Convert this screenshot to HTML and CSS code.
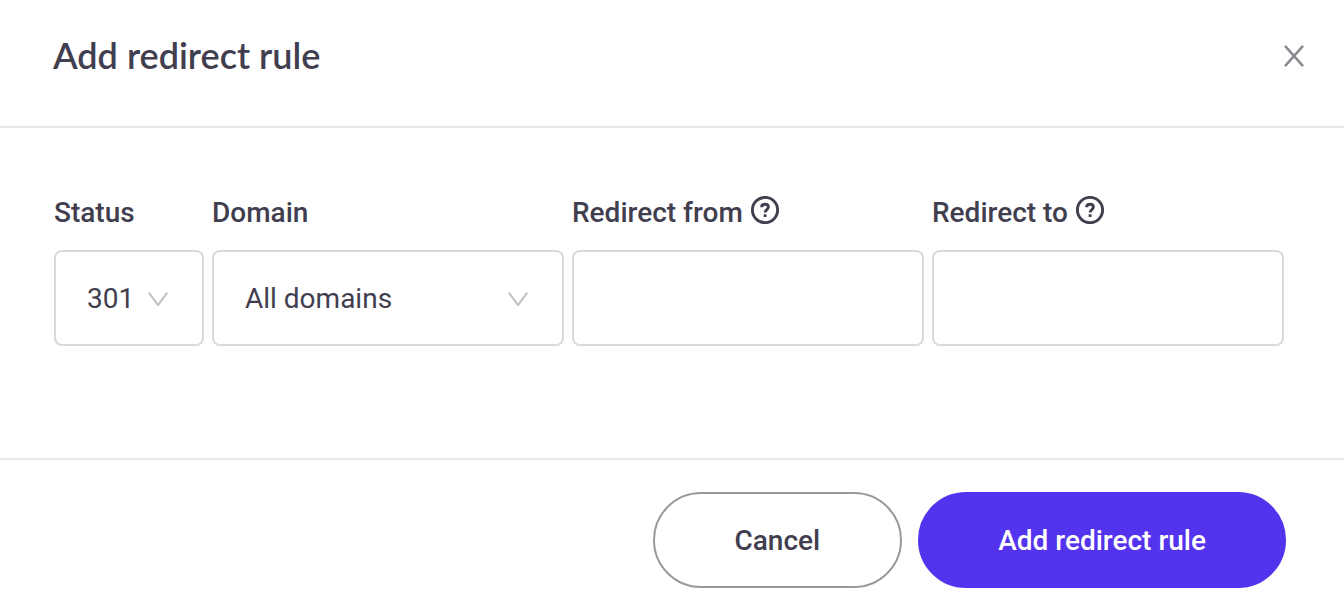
FILE: index.html
```
<!DOCTYPE html>
<html lang="en">
<head>
<meta charset="utf-8">
<meta name="viewport" content="width=device-width, initial-scale=1">
<title>Add redirect rule</title>
<link rel="stylesheet" href="styles.css">
</head>
<body>
<form class="dialog" role="dialog" aria-labelledby="dialog-title">
  <header class="dialog-header">
    <h1 class="dialog-title" id="dialog-title">Add redirect rule</h1>
    <button class="close" type="button" aria-label="Close">
      <svg class="close-icon" viewBox="0 0 20 22" aria-hidden="true"><path d="M1 .8 19 21.2M19 .8 1 21.2"/></svg>
    </button>
  </header>
  <div class="dialog-body">
    <div class="field">
      <div class="label-row"><label for="status">Status</label></div>
      <div class="select-box">
        <select class="control" id="status"><option>301</option><option>302</option></select>
        <svg class="chevron" viewBox="0 0 20 14" aria-hidden="true"><path d="M.8.6 10 13 19.2.6"/></svg>
      </div>
    </div>
    <div class="field">
      <div class="label-row"><label for="domain">Domain</label></div>
      <div class="select-box">
        <select class="control" id="domain"><option>All domains</option></select>
        <svg class="chevron" viewBox="0 0 20 14" aria-hidden="true"><path d="M.8.6 10 13 19.2.6"/></svg>
      </div>
    </div>
    <div class="field">
      <div class="label-row">
        <label for="from">Redirect from</label>
        <button class="help" type="button" aria-label="Help for redirect from">
          <svg class="help-icon" viewBox="0 0 28 28" aria-hidden="true"><circle cx="14" cy="14" r="12.6"/><path d="M10.6 11.3c0-2 1.400-3.100 3.400-3.100s3.400 1.200 3.400 2.900c0 2.400-3.300 2.500-3.300 5.400M14.100 18.200v2.800"/></svg>
        </button>
      </div>
      <input class="control" id="from" type="text">
    </div>
    <div class="field">
      <div class="label-row">
        <label for="to">Redirect to</label>
        <button class="help" type="button" aria-label="Help for redirect to">
          <svg class="help-icon" viewBox="0 0 28 28" aria-hidden="true"><circle cx="14" cy="14" r="12.6"/><path d="M10.6 11.3c0-2 1.400-3.100 3.400-3.100s3.400 1.200 3.400 2.900c0 2.400-3.300 2.500-3.300 5.400M14.100 18.200v2.800"/></svg>
        </button>
      </div>
      <input class="control" id="to" type="text">
    </div>
  </div>
  <footer class="dialog-footer">
    <button class="button" type="button">Cancel</button>
    <button class="button button-primary" type="submit">Add redirect rule</button>
  </footer>
</form>
</body>
</html>
```

FILE: styles.css
```
* {
  box-sizing: border-box;
}

body {
  margin: 0;
  background: #fff;
  color: #413e4f;
  font-family: Roboto, "Liberation Sans", sans-serif;
  font-size: 28px;
  line-height: 34px;
}

button,
input,
select {
  margin: 0;
  color: inherit;
  font: inherit;
}

.dialog-header {
  display: flex;
  align-items: center;
  justify-content: space-between;
  padding: 32px 40px 46px 53px;
  border-bottom: 2px solid #e8e8e8;
}

.dialog-title {
  margin: 0;
  padding-bottom: 2px;
  font-family: Lato, "Open Sans", sans-serif;
  font-size: 36px;
  font-weight: 600;
  line-height: 46px;
}

.close,
.help {
  display: flex;
  padding: 0;
  border: 0;
  background: none;
  cursor: pointer;
}

.close-icon {
  width: 20px;
  height: 22px;
  fill: none;
  stroke: #8a8990;
  stroke-width: 2.5;
}

.dialog-body {
  display: grid;
  grid-template-columns: 150px repeat(3, 1fr);
  gap: 8px;
  padding: 68px 60px 112px 54px;
}

.label-row {
  display: flex;
  align-items: flex-start;
  gap: 8px;
  margin-bottom: 20px;
  font-weight: 500;
}

.help-icon {
  width: 28px;
  height: 28px;
  fill: none;
  stroke: #413e4f;
  stroke-width: 2.9;
}

.select-box {
  display: grid;
  align-items: center;
}

.select-box > * {
  grid-area: 1 / 1;
}

.control {
  display: block;
  width: 100%;
  height: 96px;
  padding: 2px 31px 0;
  border: 2px solid #d9d9d9;
  border-radius: 8px;
  background: #fff;
  appearance: none;
}

.chevron {
  width: 20px;
  height: 14px;
  margin-top: 2px;
  margin-right: 36px;
  justify-self: end;
  fill: none;
  stroke: #bfbfbf;
  stroke-width: 2;
  pointer-events: none;
}

.dialog-footer {
  display: flex;
  justify-content: flex-end;
  gap: 16px;
  padding: 32px 58px 26px;
  border-top: 2px solid #e8e8e8;
}

.button {
  height: 96px;
  padding: 2px 80px 0;
  border: 2px solid #999;
  border-radius: 48px;
  background: #fff;
  font-weight: 500;
  cursor: pointer;
}

.button-primary {
  padding: 2px 78px 0;
  border-color: #5333ed;
  background: #5333ed;
  color: #fff;
}
```
